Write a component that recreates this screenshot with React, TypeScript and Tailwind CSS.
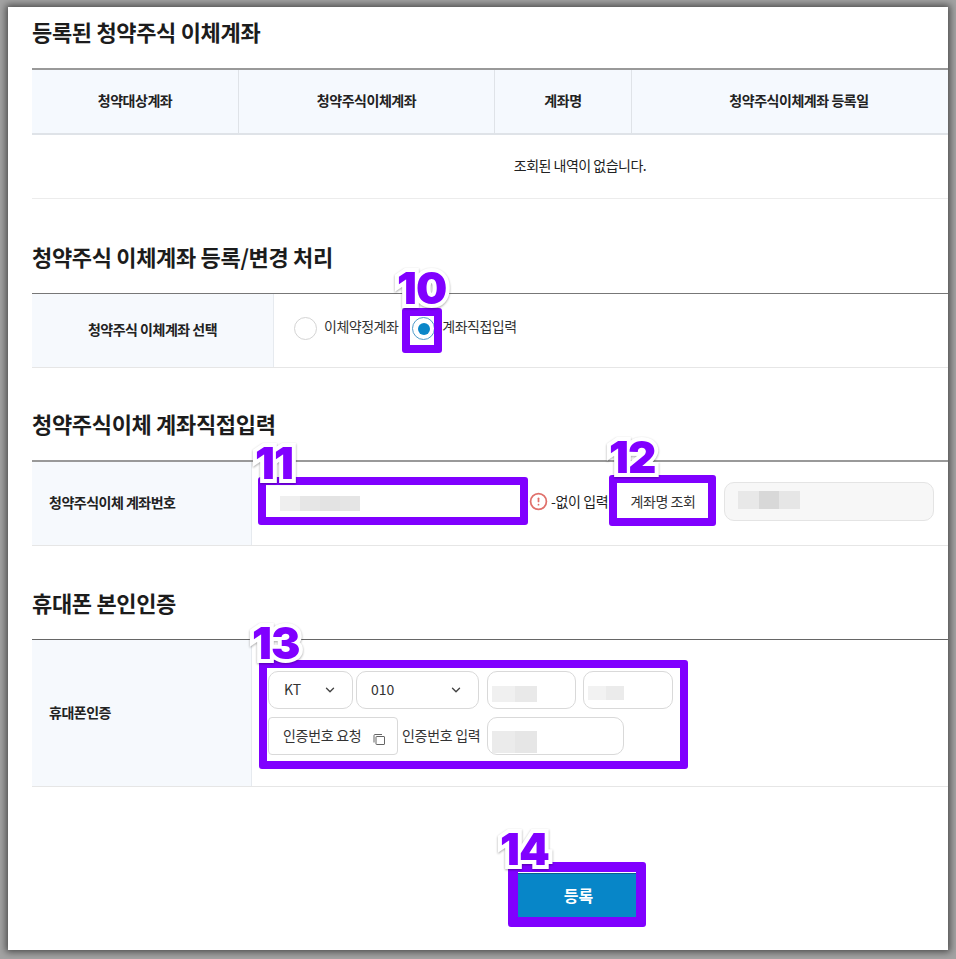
import { ChevronDown, CircleAlert } from 'lucide-react';

// 모자이크 처리된 입력값
function Mosaic({ cells, className }: { cells: string[]; className: string }) {
  return (
    <div className={`flex ${className}`}>
      {cells.map((c, i) => (
        <div key={i} className={`flex-1 ${c}`} />
      ))}
    </div>
  );
}

function SectionTitle({ children, className }: { children: string; className: string }) {
  return <h2 className={`h-[50px] mb-[11px] pb-[2px] flex items-center text-[22px] font-bold tracking-[-0.33px] text-[#1c1c1c] ${className}`}>{children}</h2>;
}

function Select({ label, width, pad }: { label: string; width: string; pad: string }) {
  return (
    <div className={`h-[38px] ${width} ${pad} border border-[#d9d9d9] rounded-[10px] flex items-center justify-between text-[14px] text-[#333]`}>
      <span className="pb-[2px]">{label}</span>
      <ChevronDown size={14} strokeWidth={2.4} className="text-[#444]" />
    </div>
  );
}

function Field({ width, children }: { width: string; children?: React.ReactNode }) {
  return <div className={`h-[38px] ${width} border border-[#d9d9d9] rounded-[10px] bg-white pl-[4px] pt-[14px]`}>{children}</div>;
}

const boxes = [
  'left-[402px] top-[308px] w-[40px] h-[45px] border-[8px]',
  'left-[258px] top-[477px] w-[270px] h-[48px] border-[8px]',
  'left-[609px] top-[475px] w-[107px] h-[51px] border-[8px]',
  'left-[259px] top-[660px] w-[429px] h-[109px] border-[8px]',
  'left-[508px] top-[862px] w-[138px] h-[65px] border-x-[10px] border-y-[10px]',
];

const numbers = [
  { text: '10', pos: 'left-[397px] top-[263px]' },
  { text: '11', pos: 'left-[255px] top-[438px]' },
  { text: '12', pos: 'left-[609px] top-[432px]' },
  { text: '13', pos: 'left-[252px] top-[618px]' },
  { text: '14', pos: 'left-[500px] top-[824px]' },
];

export default function App() {
  return (
    <div className="relative w-[956px] h-[959px] overflow-hidden bg-[#a3a3a3] p-2 font-['Noto_Sans_CJK_KR','Noto_Sans',sans-serif]">
      <div className="h-[943px] bg-white pl-6 shadow-[0_0_7px_2px_rgba(0,0,0,0.55)]">
        <SectionTitle className="mt-[-1px]">등록된 청약주식 이체계좌</SectionTitle>
        <div className="border-t-2 border-[#999]">
          <div className="grid grid-cols-[207px_256px_137px_1fr] h-[65px] bg-[#f5f9fe] border-b-2 border-[#dfe3e8] text-[14px] font-bold tracking-[-0.45px] text-[#222]">
            <div className="flex items-center justify-center pb-[2px] border-r border-[#dfe3e8]">청약대상계좌</div>
            <div className="flex items-center justify-center pb-[2px] border-r border-[#dfe3e8]">청약주식이체계좌</div>
            <div className="flex items-center justify-center pb-[2px] border-r border-[#dfe3e8]">계좌명</div>
            <div className="flex items-center justify-center pb-[2px] pl-[18px]">청약주식이체계좌 등록일</div>
          </div>
          <div className="h-[64px] flex items-center justify-center pb-[2px] pl-[180px] border-b border-[#ececec] text-[14px] tracking-[-0.5px] text-[#222]">조회된 내역이 없습니다.</div>
        </div>

        <SectionTitle className="mt-[33px]">청약주식 이체계좌 등록/변경 처리</SectionTitle>
        <div className="flex h-[75px] border-t border-[#777] border-b border-b-[#e6e6e6]">
          <div className="w-[242px] bg-[#f6f9fd] border-r border-[#e6eaef] flex items-center justify-center pb-[2px] text-[14px] font-bold tracking-[-0.5px] text-[#222]">청약주식 이체계좌 선택</div>
          <div className="flex items-center pl-[20px] pb-[4px] text-[14px] tracking-[-0.5px] text-[#333]">
            <div className="w-[23px] h-[23px] rounded-full border border-[#d4d4d4] bg-white" />
            <span className="ml-[7px] pb-[5px]">이체약정계좌</span>
            <div className="ml-[14px] w-[23px] h-[23px] rounded-full border border-[#4f9bc8] bg-white flex items-center justify-center">
              <div className="w-[12px] h-[12px] rounded-full bg-[#0a86c8]" />
            </div>
            <span className="ml-[7px] pb-[5px]">계좌직접입력</span>
          </div>
        </div>

        <SectionTitle className="mt-[31px]">청약주식이체 계좌직접입력</SectionTitle>
        <div className="flex h-[86px] border-t-2 border-[#999] border-b border-b-[#e6e6e6]">
          <div className="w-[220px] bg-[#f6f9fd] border-r border-[#e6eaef] flex items-center pl-[17px] pb-[2px] text-[14px] font-bold tracking-[-0.5px] text-[#222]">청약주식이체 계좌번호</div>
          <div className="flex items-center pl-[14px] pb-[4px] text-[14px] tracking-[-0.4px] text-[#222]">
            <div className="w-[254px] h-[32px] bg-white pl-[14px] pt-[10px]">
              <Mosaic className="w-[80px] h-[15px]" cells={['bg-[#efefef]', 'bg-[#e6e6e6]', 'bg-[#e3e3e3]', 'bg-[#e5e5e5]']} />
            </div>
            <CircleAlert size={19} strokeWidth={2.2} className="ml-[9px] text-[#e0706b]" />
            <span className="ml-[3px] w-[66px] pb-[1px]">-없이 입력</span>
            <button className="w-[92px] h-[35px] bg-white text-[14px] tracking-[-0.4px] text-[#333]">계좌명 조회</button>
            <div className="ml-[15px] w-[210px] h-[39px] bg-[#f7f7f7] border border-[#e4e4e4] rounded-[10px] pl-[13px] pt-[8px]">
              <Mosaic className="w-[62px] h-[18px]" cells={['bg-[#e8e8e8]', 'bg-[#d8d8d8]', 'bg-[#e6e6e6]']} />
            </div>
          </div>
        </div>

        <SectionTitle className="mt-[32px]">휴대폰 본인인증</SectionTitle>
        <div className="flex h-[148px] border-t border-[#666] border-b border-b-[#e6e6e6]">
          <div className="w-[220px] bg-[#f6f9fd] border-r border-[#e6eaef] flex items-center pl-[17px] pb-[2px] text-[14px] font-bold tracking-[-0.5px] text-[#222]">휴대폰인증</div>
          <div className="flex flex-col justify-center gap-[8px] pl-[16px]">
            <div className="flex items-center">
              <Select label="KT" width="w-[85px]" pad="pl-[15px] pr-[15px]" />
              <div className="ml-[3px]">
                <Select label="010" width="w-[123px]" pad="pl-[14px] pr-[15px]" />
              </div>
              <div className="ml-[8px]">
                <Field width="w-[89px]">
                  <Mosaic className="w-[45px] h-[16px]" cells={['bg-[#f0f0f0]', 'bg-[#e9e9e9]']} />
                </Field>
              </div>
              <div className="ml-[7px]">
                <Field width="w-[90px]">
                  <Mosaic className="w-[36px] h-[14px]" cells={['bg-[#f2f2f2]', 'bg-[#ebebeb]']} />
                </Field>
              </div>
            </div>
            <div className="flex items-center text-[14px] tracking-[-0.3px] text-[#333]">
              <button className="w-[130px] h-[38px] border border-[#d9d9d9] rounded-[4px] flex items-center pl-[14px] text-[14px] tracking-[-0.3px]">
                <span className="pb-[2px]">인증번호 요청</span>
                <svg width="13" height="13" viewBox="0 0 13 13" fill="none" stroke="#666" className="ml-[12px] mt-[6px]">
                  <path d="M1 9.5V2.5Q1 1.5 2 1.5H9" strokeWidth="1" />
                  <rect x="3" y="3.5" width="8.5" height="8" rx="0.5" strokeWidth="1" />
                </svg>
              </button>
              <span className="ml-[4px] w-[77px] pb-[2px] whitespace-nowrap">인증번호 입력</span>
              <div className="ml-[8px]">
                <Field width="w-[137px]">
                  <Mosaic className="w-[45px] h-[22px] mt-[-1px]" cells={['bg-[#ebebeb]', 'bg-[#e6e6e6]']} />
                </Field>
              </div>
            </div>
          </div>
        </div>

        <div className="mt-[86px] ml-[486px] w-[118px] h-[45px] bg-[#0786c8] border-t border-[#0a5f8e] flex items-center justify-center pb-[2px] pl-[3px] text-[16px] font-bold text-white">등록</div>
      </div>

      {/* 안내용 표시 */}
      {boxes.map((b) => (
        <div key={b} className={`absolute ${b} border-[#8000ff] rounded-[3px] pointer-events-none`} />
      ))}
      {numbers.map((n) => (
        <div key={n.text} className={`absolute ${n.pos} font-['Inter',sans-serif] text-[44px] leading-[50px] font-black tracking-[-1px] text-[#8000ff] [-webkit-text-stroke:8px_white] [paint-order:stroke_fill] drop-shadow-[0_1px_1px_rgba(0,0,0,0.35)] pointer-events-none`}>
          {n.text}
        </div>
      ))}
    </div>
  );
}
